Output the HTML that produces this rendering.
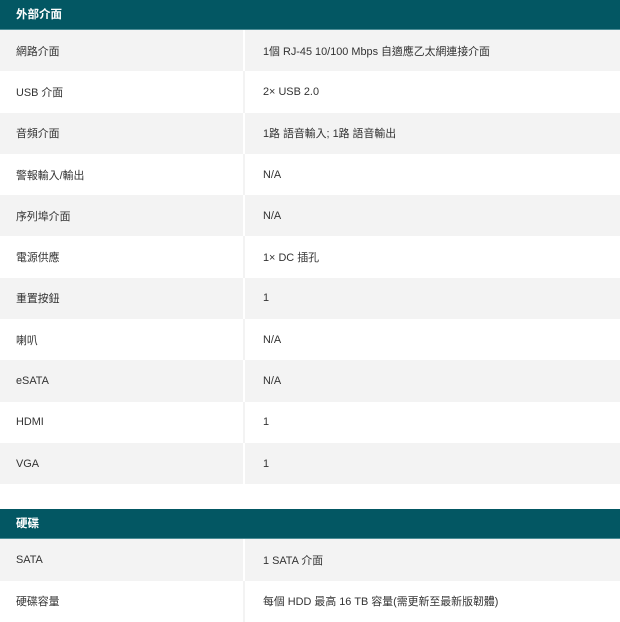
<!DOCTYPE html>
<html><head><meta charset="utf-8"><style>
body{margin:0;width:620px;height:620px;overflow:hidden;background:#fff;font-family:"Liberation Sans","Noto Sans CJK TC",sans-serif;font-size:10.9px;color:#333}
.h{background:#035763;color:#fff;font-weight:bold;height:30px;line-height:30px;padding-left:16px;border-bottom:1px solid #4d8d96;box-sizing:border-box;font-size:11.5px}
.r{display:flex;height:41.3px;align-items:center}
.r div:first-child{width:245px;padding-left:16px;box-sizing:border-box;height:100%;display:flex;align-items:center;border-right:2px solid #fff}
.r div:last-child{padding-left:18px;height:100%;display:flex;align-items:center;flex:1}
.g{background:#f3f3f3}
.w div:first-child{border-right:2px solid #f3f3f3}
</style></head><body>
<div class="h">外部介面</div>
<div class="r g"><div>網路介面</div><div>1個 RJ-45 10/100 Mbps 自適應乙太網連接介面</div></div>
<div class="r w"><div>USB 介面</div><div>2× USB 2.0</div></div>
<div class="r g"><div>音頻介面</div><div>1路 語音輸入; 1路 語音輸出</div></div>
<div class="r w"><div>警報輸入/輸出</div><div>N/A</div></div>
<div class="r g"><div>序列埠介面</div><div>N/A</div></div>
<div class="r w"><div>電源供應</div><div>1× DC 插孔</div></div>
<div class="r g"><div>重置按鈕</div><div>1</div></div>
<div class="r w"><div>喇叭</div><div>N/A</div></div>
<div class="r g"><div>eSATA</div><div>N/A</div></div>
<div class="r w"><div>HDMI</div><div>1</div></div>
<div class="r g"><div>VGA</div><div>1</div></div>
<div style="height:25px"></div>
<div class="h">硬碟</div>
<div class="r g"><div>SATA</div><div>1 SATA 介面</div></div>
<div class="r w"><div>硬碟容量</div><div>每個 HDD 最高 16 TB 容量(需更新至最新版韌體)</div></div>
</body></html>
